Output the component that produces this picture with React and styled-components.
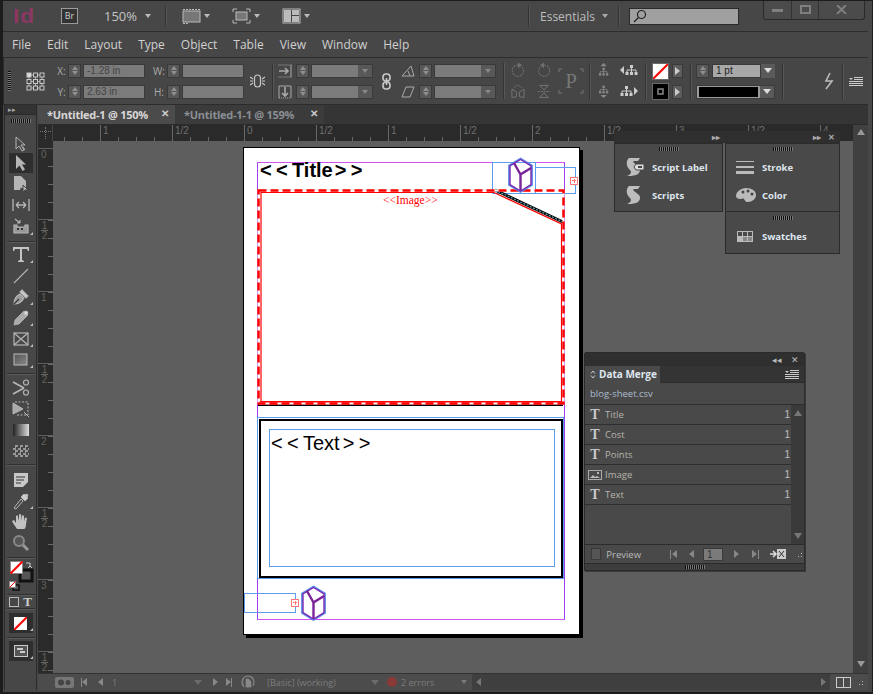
import styled, { createGlobalStyle } from "styled-components";

const GlobalStyle = createGlobalStyle`
  html, body { margin: 0; padding: 0; background: #222; }
  * { box-sizing: border-box; }
`;

const UI = `"Open Sans", "Noto Sans", "Liberation Sans", sans-serif`;

const Window = styled.div`
  width: 873px;
  height: 694px;
  background: #474747;
  border: 1px solid #1c1c1c;
  border-width: 1px 1px 2px 3px;
  padding: 0 4px 2px 0;
  display: flex;
  flex-direction: column;
  overflow: hidden;
  font-family: ${UI};
  color: #c8c8c8;
  position: relative;
`;

const AppBar = styled.div`
  height: 31px;
  flex: none;
  display: flex;
  align-items: center;
  border-bottom: 1px solid #2e2e2e;
  position: relative;
`;

const Logo = styled.div`
  font: bold 23px "Liberation Sans", sans-serif;
  color: #8c3763;
  width: 58px;
  padding-left: 10px;
  letter-spacing: 0.5px;
  transform: scaleY(0.9);
`;

const BridgeBox = styled.div`
  width: 17px;
  height: 16px;
  border: 1px solid #9a9a9a;
  background: #333;
  font-size: 9px;
  line-height: 14px;
  text-align: center;
  color: #ccc;
`;

const ZoomText = styled.div`
  font-size: 13px;
  color: #c4c4c4;
  margin-left: 26px;
  width: 41px;
`;

const Caret = styled.span`
  display: inline-block;
  width: 0;
  height: 0;
  border-left: ${(p) => p.$s || 3}px solid transparent;
  border-right: ${(p) => p.$s || 3}px solid transparent;
  border-top: ${(p) => (p.$s || 3) + 1}px solid ${(p) => p.$c || "#bbb"};
`;

const BarSep = styled.div`
  width: 1px;
  height: 20px;
  background: #333;
  box-shadow: 1px 0 0 #555;
  margin-left: ${(p) => p.$ml}px;
`;

const BarIcon = styled.div`
  display: flex;
  align-items: center;
  gap: 3px;
  margin-left: ${(p) => p.$ml}px;
  color: #bbb;
`;

const Essentials = styled.div`
  font-size: 12px;
  margin-left: 11px;
  width: 62px;
  color: #bdbdbd;
`;

const SearchBox = styled.div`
  width: 110px;
  height: 17px;
  margin-left: 10px;
  background: #a0a0a0;
  border: 1px solid #2b2b2b;
  display: flex;
  align-items: center;
  padding-left: 3px;
`;

const WinControls = styled.div`
  position: absolute;
  top: -1px;
  right: 3px;
  width: 102px;
  height: 20px;
  background: #4b4b4b;
  border: 1px solid #2a2a2a;
  border-top: 0;
  border-radius: 0 0 3px 3px;
  display: grid;
  grid-template-columns: 27px 27px 1fr;
`;

const WinButton = styled.div`
  display: flex;
  align-items: center;
  justify-content: center;
  border-left: ${(p) => (p.$first ? "0" : "1px solid #333")};
`;

const MenuBar = styled.div`
  height: 25px;
  flex: none;
  display: flex;
  align-items: center;
  padding-left: 9px;
  gap: 16px;
  font-size: 12px;
  color: #d0d0d0;
`;

const ControlBar = styled.div`
  height: 48px;
  flex: none;
  display: flex;
  align-items: center;
  background: #464646;
  border: 1px solid #2c2c2c;
  border-right: 0;
`;

const Col = styled.div`
  width: ${(p) => p.$w}px;
  margin-left: ${(p) => p.$ml || 0}px;
  flex: none;
  display: flex;
  flex-direction: column;
  gap: 7px;
  align-items: center;
`;

const Cell = styled.div`
  height: 14px;
  width: 100%;
  display: flex;
  align-items: center;
  justify-content: center;
  color: ${(p) => p.$c || "#aaa"};
  font-size: 10px;
`;

const Spinner = styled.div`
  width: ${(p) => p.$w || "100%"};
  flex: none;
  height: 14px;
  background: #585858;
  border: 1px solid #3a3a3a;
  display: flex;
  flex-direction: column;
  align-items: center;
  justify-content: space-around;
  padding: 1px 0;
  &::before {
    content: "";
    border-left: 3px solid transparent;
    border-right: 3px solid transparent;
    border-bottom: 4px solid #8f8f8f;
  }
  &::after {
    content: "";
    border-left: 3px solid transparent;
    border-right: 3px solid transparent;
    border-top: 4px solid #8f8f8f;
  }
`;

const Field = styled.div`
  width: 100%;
  height: 14px;
  background: ${(p) => p.$bg || "#7b7b7b"};
  border: 1px solid #3a3a3a;
  font: 10px "Liberation Sans", sans-serif;
  line-height: 12px;
  padding-left: 3px;
  color: ${(p) => p.$c || "#444"};
`;

const Select = styled.div`
  width: 100%;
  height: 14px;
  background: ${(p) => p.$bg || "#7b7b7b"};
  border: 1px solid #3a3a3a;
  display: flex;
  justify-content: flex-end;
`;

const SelectArrow = styled.div`
  width: 14px;
  background: ${(p) => p.$bg || "#585858"};
  display: flex;
  align-items: center;
  justify-content: center;
  flex: none;
`;

const StrokeLine = styled.div`
  flex: 1;
  margin: 1px 2px;
  background: #000;
`;

const WeightBox = styled.div`
  flex: 1;
  margin-left: 3px;
  height: 14px;
  display: flex;
`;

const SepCol = styled.div`
  width: 1px;
  height: 36px;
  margin-left: ${(p) => p.$ml}px;
  background: #333;
  box-shadow: 1px 0 0 #585858;
  flex: none;
`;

const FillSwatch = styled.div`
  width: 100%;
  height: 17px;
  border: 1px solid #6a6a6a;
  background: ${(p) => (p.$black ? "#000" : "#fff")};
  display: flex;
  align-items: center;
  justify-content: center;
`;

const SwatchCol = styled.div`
  width: 17px;
  margin-left: 6px;
  flex: none;
  display: flex;
  flex-direction: column;
  gap: 3px;
`;

const ArrowBtn = styled.div`
  width: 100%;
  height: 14px;
  background: #5c5c5c;
  border: 1px solid #3a3a3a;
  display: flex;
  align-items: center;
  justify-content: center;
  &::after {
    content: "";
    border-top: 4px solid transparent;
    border-bottom: 4px solid transparent;
    border-left: 5px solid #ccc;
  }
`;

const Body = styled.div`
  flex: 1;
  min-height: 0;
  display: flex;
`;

const ToolColumn = styled.div`
  width: 33px;
  flex: none;
  border-right: 1px solid #2b2b2b;
  margin-left: 1px;
  border-left: 1px solid #2b2b2b;
  display: flex;
  flex-direction: column;
  align-items: center;
  background: #474747;
`;

const ToolHead = styled.div`
  width: 100%;
  height: 10px;
  background: #333;
  color: #aaa;
  font-size: 7px;
  line-height: 9px;
  padding-left: 3px;
  border-bottom: 1px solid #2b2b2b;
`;

const Grip = styled.div`
  width: ${(p) => p.$w || 20}px;
  height: ${(p) => p.$h || 4}px;
  margin: ${(p) => p.$m || "5px 0"};
  flex: none;
  background: ${(p) =>
    p.$h
      ? "repeating-linear-gradient(180deg, #111 0 1px, #777 1px 2px)"
      : "repeating-linear-gradient(90deg, #111 0 1px, #777 1px 2px)"};
`;

const Tool = styled.div`
  width: 24px;
  height: ${(p) => p.$h || 21}px;
  flex: none;
  display: flex;
  align-items: center;
  justify-content: center;
  color: #b5b5b5;
  background: ${(p) => (p.$on ? "#2e2e2e" : "transparent")};
  position: relative;
  &::after {
    content: ${(p) => (p.$more ? '""' : "none")};
    position: absolute;
    right: 0;
    bottom: 2px;
    border-left: 3px solid transparent;
    border-bottom: 3px solid #bbb;
  }
`;

const ToolSep = styled.div`
  width: 28px;
  height: 1px;
  background: #2f2f2f;
  box-shadow: 0 1px 0 #5a5a5a;
  margin: ${(p) => p.$m || "3px 0 3px"};
  flex: none;
`;

const Checker = styled.div`
  width: 16px;
  height: 12px;
  background: repeating-conic-gradient(#999 0 25%, #444 0 50%) 0 0 / 5px 5px;
`;

const FillStroke = styled.div`
  width: 26px;
  height: 30px;
  flex: none;
`;

const FormatRow = styled.div`
  display: flex;
  align-items: center;
  gap: 4px;
  height: 13px;
  flex: none;
`;

const FormatSquare = styled.div`
  width: 10px;
  height: 10px;
  border: 1px solid #bbb;
`;

const FormatT = styled.div`
  font: bold 13px "Liberation Serif", serif;
  color: #ccc;
`;

const Workspace = styled.div`
  flex: 1;
  min-width: 0;
  display: flex;
  flex-direction: column;
  margin-left: 1px;
`;

const TabRow = styled.div`
  height: 20px;
  flex: none;
  display: flex;
  background: #353535;
  border-bottom: 1px solid #2b2b2b;
`;

const Tab = styled.div`
  width: ${(p) => p.$w}px;
  display: flex;
  align-items: center;
  padding-left: 9px;
  font: bold 11px "Open Sans", sans-serif;
  letter-spacing: -0.25px;
  background: ${(p) => (p.$on ? "#4b4b4b" : "#3b3b3b")};
  color: ${(p) => (p.$on ? "#d8d8d8" : "#8a8f94")};
  position: relative;
`;

const TabClose = styled.span`
  position: absolute;
  right: 6px;
  top: 1px;
  font-size: 10px;
  color: #ccc;
`;

const RulerRow = styled.div`
  height: 16px;
  flex: none;
  display: flex;
`;

const RulerCorner = styled.div`
  width: 15px;
  flex: none;
  background: #2a2a2a;
  border-right: 1px solid #444;
  position: relative;
  &::before {
    content: "";
    position: absolute;
    left: 7px;
    top: 2px;
    height: 12px;
    border-left: 1px dotted #777;
  }
  &::after {
    content: "";
    position: absolute;
    left: 2px;
    top: 6px;
    width: 11px;
    border-top: 1px dotted #777;
  }
`;

const HRuler = styled.div`
  flex: 1;
  background-color: #2a2a2a;
  position: relative;
  overflow: hidden;
  background-image: repeating-linear-gradient(90deg, #6a6a6a 0 1px, transparent 1px 18px);
  background-size: calc(100% + 18px) 4px;
  background-repeat: no-repeat;
  background-position: -7px bottom;
`;

const HMajor = styled.div`
  position: absolute;
  top: 0;
  bottom: 0;
  border-left: 1px solid #6a6a6a;
  padding-left: 2px;
  font: 10px "Liberation Sans", sans-serif;
  color: #6f6f6f;
  line-height: 11px;
`;

const Middle = styled.div`
  flex: 1;
  min-height: 0;
  display: flex;
`;

const VRuler = styled.div`
  width: 15px;
  flex: none;
  background-color: #2a2a2a;
  position: relative;
  overflow: hidden;
  background-image: repeating-linear-gradient(180deg, #6a6a6a 0 1px, transparent 1px 18px);
  background-size: 5px calc(100% + 18px);
  background-repeat: no-repeat;
  background-position: right -11px;
`;

const VMajor = styled.div`
  position: absolute;
  left: 0;
  right: 0;
  border-top: 1px solid #5f5f5f;
  font: 10px "Liberation Sans", sans-serif;
  color: #68645c;
  line-height: 10px;
  padding: 1px 0 0 3px;
`;

const Fraction = styled.div`
  width: 7px;
  text-align: center;
  line-height: 9px;
  &:first-child { border-bottom: 1px solid #666; }
`;

const Canvas = styled.div`
  flex: 1;
  min-width: 0;
  background: #5e5e5e;
  position: relative;
`;

const VScroll = styled.div`
  width: 15px;
  flex: none;
  background: #404040;
  margin-top: -16px;
  display: flex;
  flex-direction: column;
  justify-content: space-between;
  align-items: center;
  padding: 4px 0 6px;
  position: relative;
`;

const ScrollUp = styled.div`
  border-left: 4px solid transparent;
  border-right: 4px solid transparent;
  border-bottom: 6px solid ${(p) => p.$c || "#999"};
`;

const ScrollDown = styled.div`
  border-left: 4px solid transparent;
  border-right: 4px solid transparent;
  border-top: 6px solid ${(p) => p.$c || "#999"};
`;

const StatusBar = styled.div`
  height: 17px;
  flex: none;
  background: #4c4c4c;
  border-top: 1px solid #333;
  display: flex;
  align-items: center;
  font: 9px "Open Sans", sans-serif;
  color: #7d7d7d;
  position: relative;
`;

const StatusItem = styled.div`
  margin-left: ${(p) => p.$ml || 0}px;
  width: ${(p) => (p.$w ? p.$w + "px" : "auto")};
  flex: none;
  display: flex;
  align-items: center;
`;

const ErrorDot = styled.span`
  width: 10px;
  height: 10px;
  border-radius: 50%;
  background: #8a3a36;
  display: inline-block;
`;

const HScroll = styled.div`
  flex: 1;
  height: 100%;
  margin-left: 5px;
  background: #3f3f3f;
  display: flex;
  align-items: center;
  justify-content: space-between;
  padding: 0 4px;
`;

const LeftTri = styled.span`
  border-top: 4px solid transparent;
  border-bottom: 4px solid transparent;
  border-right: 5px solid ${(p) => p.$c || "#888"};
`;

const RightTri = styled.span`
  border-top: 4px solid transparent;
  border-bottom: 4px solid transparent;
  border-left: 5px solid ${(p) => p.$c || "#888"};
`;

const LayoutBox = styled.div`
  width: 38px;
  flex: none;
  height: 100%;
  display: flex;
  align-items: center;
  justify-content: flex-end;
  gap: 4px;
  padding-right: 3px;
`;

const SplitIcon = styled.div`
  width: 15px;
  height: 11px;
  border: 1px solid #ccc;
  position: relative;
  &::after {
    content: "";
    position: absolute;
    left: 6px;
    top: 0;
    height: 9px;
    border-left: 1px solid #ccc;
  }
`;

const Dots = styled.div`
  width: 10px;
  height: 10px;
  margin-left: ${(p) => p.$ml || 0}px;
  flex: none;
  background: radial-gradient(#bbb 0.6px, transparent 0.8px);
  background-size: 3px 3px;
  clip-path: polygon(100% 0, 100% 100%, 0 100%);
`;

const Page = styled.div`
  position: absolute;
  left: 191px;
  top: 7px;
  width: 335px;
  height: 486px;
  background: #fff;
  box-shadow: 0 0 0 1px #000, 3px 3px 0 1px #000;
`;

const Frame = styled.div`
  position: absolute;
  left: ${(p) => p.$x - 244}px;
  top: ${(p) => p.$y - 148}px;
  width: ${(p) => p.$w}px;
  height: ${(p) => p.$h}px;
  border: ${(p) => p.$b || "1px solid #5b9bf0"};
`;

const MarginBox = styled.div`
  position: absolute;
  left: 13px;
  top: 14px;
  width: 308px;
  height: 458px;
  border: 1px solid;
  border-color: #d050f0 #a040f0 #d050f0 #a040f0;
`;

const PageText = styled.div`
  position: absolute;
  left: ${(p) => p.$x - 244}px;
  top: ${(p) => p.$y - 148}px;
  font: ${(p) => p.$font};
  color: ${(p) => p.$c || "#000"};
  white-space: nowrap;
`;

const Chevrons = styled.span`
  letter-spacing: 4.3px;
`;

const Word = styled.span`
  margin-right: ${(p) => p.$mr}px;
`;

const Art = styled.svg`
  position: absolute;
  left: ${(p) => p.$x - 244}px;
  top: ${(p) => p.$y - 148}px;
  overflow: visible;
`;

const Overset = styled.div`
  position: absolute;
  left: ${(p) => p.$x - 244}px;
  top: ${(p) => p.$y - 148}px;
  width: 8px;
  height: 8px;
  border: 1px solid #f77;
  background: #fff;
  &::before {
    content: "";
    position: absolute;
    left: 1px;
    top: 2px;
    width: 4px;
    border-top: 1px solid #f77;
  }
  &::after {
    content: "";
    position: absolute;
    left: 2.5px;
    top: 1px;
    height: 4px;
    border-left: 1px solid #f77;
  }
`;

const Dock = styled.div`
  position: absolute;
  left: ${(p) => p.$x}px;
  top: ${(p) => p.$y}px;
  width: ${(p) => p.$w}px;
  display: flex;
  flex-direction: column;
  font: bold 9.5px "Open Sans", sans-serif;
  color: #dfe6ee;
`;

const DockHead = styled.div`
  height: 12px;
  background: #2f2f2f;
  border-radius: 2px 2px 0 0;
  display: flex;
  justify-content: flex-end;
  align-items: center;
  gap: 7px;
  padding-right: 5px;
  font-size: 8px;
  line-height: 12px;
  color: #aaa;
`;

const HeadMark = styled.span`
  margin-right: ${(p) => p.$mr || 0}px;
`;

const DockCols = styled.div`
  display: flex;
  gap: 2px;
  align-items: flex-start;
`;

const DockPane = styled.div`
  width: ${(p) => p.$w}px;
  height: ${(p) => p.$h}px;
  margin-top: ${(p) => p.$mt || 0}px;
  background: #494949;
  border: 1px solid #2b2b2b;
  display: flex;
  flex-direction: column;
  align-items: center;
`;

const DockStack = styled.div`
  display: flex;
  flex-direction: column;
`;

const DockItem = styled.div`
  width: 100%;
  height: 28px;
  display: flex;
  align-items: center;
  padding-left: ${(p) => p.$pl}px;
`;

const DockIcon = styled.div`
  width: ${(p) => p.$w}px;
  flex: none;
  display: flex;
  justify-content: center;
  color: #c4c4c4;
`;

const DockLabel = styled.span`
  margin-left: ${(p) => p.$ml}px;
`;

const MergePanel = styled.div`
  position: absolute;
  left: 531px;
  top: 211px;
  width: 221px;
  height: 219px;
  background: #494949;
  border: 1px solid #2b2b2b;
  border-radius: 2px 2px 0 0;
  display: flex;
  flex-direction: column;
  box-shadow: 1px 1px 0 #3a3a3a;
`;

const MergeHead = styled.div`
  height: 13px;
  flex: none;
  background: #2f2f2f;
  display: flex;
  justify-content: flex-end;
  align-items: center;
  gap: 9px;
  padding-right: 5px;
  font-size: 9px;
  color: #bbb;
`;

const MergeTabs = styled.div`
  height: 17px;
  flex: none;
  background: #343434;
  display: flex;
  justify-content: space-between;
  align-items: center;
  border-bottom: 1px solid #2b2b2b;
  padding-right: 5px;
`;

const MergeTab = styled.div`
  width: 75px;
  height: 17px;
  background: #4a4a4a;
  font: bold 10px "Open Sans", sans-serif;
  color: #dfe6ee;
  display: flex;
  align-items: center;
  gap: 3px;
  padding-left: 5px;
`;

const FileRow = styled.div`
  height: 22px;
  flex: none;
  display: flex;
  align-items: center;
  padding-left: 5px;
  font: 9.5px "Open Sans", sans-serif;
  color: #a9bccd;
  border-bottom: 1px solid #2e2e2e;
`;

const MergeBody = styled.div`
  flex: 1;
  min-height: 0;
  display: flex;
`;

const Rows = styled.div`
  flex: 1;
  display: flex;
  flex-direction: column;
`;

const FieldRow = styled.div`
  height: 20px;
  flex: none;
  display: flex;
  align-items: center;
  border-bottom: 1px solid #2e2e2e;
  font: 9.5px "Open Sans", sans-serif;
  color: #b8b4ac;
  padding-right: 1px;
`;

const RowIcon = styled.div`
  width: 20px;
  flex: none;
  display: flex;
  justify-content: center;
  font: bold 14px "Liberation Serif", serif;
  color: #c8c8c8;
`;

const RowCount = styled.div`
  margin-left: auto;
  font: 10px "Liberation Sans", sans-serif;
  color: #c0c0c0;
`;

const PanelScroll = styled.div`
  width: 13px;
  flex: none;
  background: #3a3a3a;
  display: flex;
  flex-direction: column;
  justify-content: space-between;
  align-items: center;
  padding: 5px 0;
`;

const MergeFoot = styled.div`
  height: 19px;
  flex: none;
  display: flex;
  align-items: center;
  border-top: 1px solid #2b2b2b;
  font: 9.5px "Open Sans", sans-serif;
  color: #bbb;
  padding-left: 6px;
`;

const CheckBox = styled.div`
  width: 12px;
  height: 12px;
  background: #555;
  border: 1px solid #3a3a3a;
  margin-right: 5px;
`;

const PagerField = styled.div`
  width: 23px;
  height: 13px;
  background: #7b7b7b;
  border: 1px solid #3a3a3a;
  font: 10px "Liberation Sans", sans-serif;
  line-height: 11px;
  color: #333;
  padding-left: 3px;
  margin: 0 11px 0 9px;
`;

const PagerBtn = styled.div`
  margin-left: ${(p) => p.$ml || 0}px;
  display: flex;
  align-items: center;
  gap: 1px;
`;

const Bar = styled.span`
  width: 1px;
  height: 9px;
  background: ${(p) => p.$c || "#888"};
`;

const GripRow = styled.div`
  height: 7px;
  flex: none;
  background: #3d3d3d;
  border-top: 1px solid #2b2b2b;
  display: flex;
  justify-content: center;
  align-items: center;
`;

// --- drawings ---

const Ico = ({ w = 18, h = 18, sw = 1.2, children, fill = "none" }) => (
  <svg width={w} height={h} viewBox={`0 0 ${w} ${h}`} fill={fill} stroke="currentColor" strokeWidth={sw} style={{ display: "block" }}>
    {children}
  </svg>
);

const Cube = ({ x, y }) => (
  <Art $x={x} $y={y} width="27" height="37" viewBox="0 0 27 37" fill="none">
    <path d="M13.5 1.5 25 8.5v19.5L13.5 35 2 28V8.5z" stroke="#5a8ae8" strokeWidth="1.8" />
    <path d="M13.5 2.5 24 9v18.5L13.5 34 3 27.5V9z" stroke="#7b2ab0" strokeWidth="1.4" />
    <path d="M13.5 34V17.5L24 11M13.5 17.5 7 6" stroke="#7b2399" strokeWidth="2.4" />
  </Art>
);

// org-chart style align glyph, with the little arrow on the side it points to
const Tree = ({ dir }) => (
  <svg width="18" height="19" viewBox="0 0 18 19" fill="currentColor" stroke="none">
    <g transform={dir === "left" ? "translate(5 3)" : dir === "right" ? "translate(0 3)" : dir === "up" ? "translate(2 5)" : "translate(2 1)"}>
      <rect x="5" y="1" width="3" height="3" />
      <rect x="0.500" y="8" width="3" height="3" />
      <rect x="5" y="8" width="3" height="3" />
      <rect x="9.500" y="8" width="3" height="3" />
      <path d="M6.500 4v4M2 8V6h9v2" fill="none" stroke="currentColor" />
    </g>
    {dir === "up" && <path d="M8.500 0l4 4h-8z" />}
    {dir === "down" && <path d="M8.500 18l4-4h-8z" />}
    {dir === "left" && <path d="M0 9l4-4v8z" />}
    {dir === "right" && <path d="M18 9l-4-4v8z" />}
  </svg>
);

const ScriptIcon = ({ tag }) => (
  <svg width="19" height="20" viewBox="0 0 19 20" fill="#bdbdbd">
    <path d="M4 1h11l-2 3H9c-1 0-1 1 0 2l5 4c2 2 1 7-3 8-3 1-7 1-9 1 2-1 4-2 4-4 0-1-1-2-2-3-3-3-3-9 0-11z" />
    {tag && <path d="M11 7h8v6h-8l-2-3z" fill="#ddd" stroke="#494949" />}
    {tag && <rect x="13" y="9" width="4" height="2" fill="#444" />}
  </svg>
);

const MenuGlyph = () => (
  <svg width="14" height="9" stroke="#ccc" fill="none">
    <path d="M5 .5h9M5 2.500h9M0 4.500h14M0 6.500h14M0 8.500h14" />
    <path d="M0 1h4L2 3z" fill="#ccc" stroke="none" />
  </svg>
);

const rulerH = [
  [62, "1"], [134, "1/2"], [206, "0"], [278, "1/2"], [350, "1"], [422, "1/2"],
  [494, "2"], [566, "1/2"], [638, "3"], [710, "1/2"], [782, "4"],
];

const rulerV = [
  [7, "0"], [78, "1/2"], [150, "1"], [222, "1/2"], [294, "2"], [366, "1/2"], [438, "3"], [510, "1/2"],
];

const mergeFields = ["Title", "Cost", "Points", "Image", "Text"];
const menus = ["File", "Edit", "Layout", "Type", "Object", "Table", "View", "Window", "Help"];

const RefPoints = () => {
  const spots = [1, 7.5, 14];
  return (
    <Ico w={19} h={19} sw={1}>
      <path d="M3 3h13M3 9.500h13M3 16h13M3 3v13M9.500 3v13M16 3v13" stroke="#aaa" />
      {spots.map((y) =>
        spots.map((x) => (
          <rect key={`${x}-${y}`} x={x} y={y} width="4" height="4" fill={x === 1 && y === 1 ? "#ddd" : "#474747"} />
        ))
      )}
    </Ico>
  );
};

const Drop = () => (
  <Select>
    <SelectArrow><Caret $c="#888" /></SelectArrow>
  </Select>
);

export default function App() {
  return (
    <>
      <GlobalStyle />
      <Window>
        <AppBar>
          <Logo>Id</Logo>
          <BridgeBox>Br</BridgeBox>
          <ZoomText>150%</ZoomText>
          <Caret $s={3} />
          <BarSep $ml={14} />
          <BarIcon $ml={16}>
            <Ico w={19} h={16} sw={1}>
              <rect x="1" y="3" width="17" height="11" fill="#777" />
              <path d="M1 1.500h17M1 15.500h6" strokeDasharray="2 1" />
            </Ico>
            <Caret />
          </BarIcon>
          <BarIcon $ml={22}>
            <Ico w={19} h={16} sw={1}>
              <rect x="4" y="4" width="11" height="8" fill="#777" />
              <path d="M1 4V1h4M14 1h4v3M1 12v3h4M14 15h4v-3" />
            </Ico>
            <Caret />
          </BarIcon>
          <BarIcon $ml={22}>
            <Ico w={19} h={16} sw={1}>
              <rect x="1" y="1" width="17" height="14" />
              <rect x="2" y="2" width="7" height="12" fill="#bbb" stroke="none" />
              <rect x="10" y="2" width="7" height="5" fill="#bbb" stroke="none" />
              <rect x="10" y="8" width="7" height="6" fill="#bbb" stroke="none" />
            </Ico>
            <Caret />
          </BarIcon>
          <BarSep $ml={218} />
          <Essentials>Essentials</Essentials>
          <Caret $c="#aaa" />
          <BarSep $ml={10} />
          <SearchBox>
            <svg width="14" height="14" viewBox="0 0 14 14" fill="none" stroke="#222" strokeWidth="1.2">
              <circle cx="8.500" cy="5.500" r="4" />
              <path d="M5.500 8.500 1 13" />
            </svg>
          </SearchBox>
          <WinControls>
            <WinButton $first>
              <svg width="11" height="4"><rect width="11" height="3" y="1" fill="#7f7f7f" /></svg>
            </WinButton>
            <WinButton>
              <svg width="11" height="9" fill="none" stroke="#7f7f7f" strokeWidth="2"><rect x="1" y="1" width="9" height="7" /></svg>
            </WinButton>
            <WinButton>
              <svg width="11" height="9" fill="none" stroke="#7f7f7f" strokeWidth="2"><path d="M1 0l9 9M10 0l-9 9" /></svg>
            </WinButton>
          </WinControls>
        </AppBar>

        <MenuBar>
          {menus.map((m) => (
            <span key={m}>{m}</span>
          ))}
        </MenuBar>

        <ControlBar>
          <Col $w={3} $ml={4}><Grip $w={3} $h={20} $m="0" /></Col>
          <Col $w={19} $ml={15}><RefPoints /></Col>
          <Col $w={11} $ml={11}><Cell>X:</Cell><Cell>Y:</Cell></Col>
          <Col $w={13} $ml={1}><Spinner /><Spinner /></Col>
          <Col $w={62} $ml={2}><Field>-1.28 in</Field><Field>2.63 in</Field></Col>
          <Col $w={12} $ml={8}><Cell>W:</Cell><Cell>H:</Cell></Col>
          <Col $w={13} $ml={2}><Spinner /><Spinner /></Col>
          <Col $w={62} $ml={2}><Field /><Field /></Col>
          <Col $w={15} $ml={6}>
            <Ico w={15} h={14} sw={1.2}>
              <rect x="4.500" y="1" width="6" height="12" rx="3" />
              <path d="M0 3l3 2M0 11l3-2M15 3l-3 2M15 11l-3-2M0 7h3M12 7h3" />
            </Ico>
          </Col>
          <SepCol $ml={7} />
          <Col $w={14} $ml={5}>
            <Cell>
              <Ico w={14} h={14} sw={1}>
                <path d="M0.500 1h13M0.500 13h13" strokeDasharray="1 1" />
                <path d="M13 1v12" />
                <path d="M1 7h9M7 4l3 3-3 3" strokeWidth="1.600" />
              </Ico>
            </Cell>
            <Cell>
              <Ico w={14} h={14} sw={1}>
                <path d="M1 13h12" strokeDasharray="1 1" />
                <path d="M1 1h12M1 1v12M13 1v12" />
                <path d="M7 2v9M4 8l3 3 3-3" strokeWidth="1.600" />
              </Ico>
            </Cell>
          </Col>
          <Col $w={13} $ml={4}><Spinner /><Spinner /></Col>
          <Col $w={62} $ml={2}><Drop /><Drop /></Col>
          <Col $w={11} $ml={8}>
            <Ico w={11} h={17} sw={1.600}>
              <rect x="2" y="1" width="7" height="7" rx="3" />
              <rect x="2" y="9" width="7" height="7" rx="3" />
              <path d="M5.500 5v7" />
            </Ico>
          </Col>
          <Col $w={14} $ml={9}>
            <Cell>
              <Ico w={14} h={12} sw={1}><path d="M1 11h12L10 1z" /><path d="M7 6l2 5" /></Ico>
            </Cell>
            <Cell>
              <Ico w={14} h={12} sw={1}><path d="M1 11 5 1h8l-4 10z" /></Ico>
            </Cell>
          </Col>
          <Col $w={13} $ml={4}><Spinner /><Spinner /></Col>
          <Col $w={62} $ml={2}><Drop /><Drop /></Col>
          <SepCol $ml={7} />
          <Col $w={14} $ml={7}>
            <Cell $c="#6f6f6f">
              <Ico w={15} h={15} sw={1.2}><path d="M12 4a6 6 0 1 1-3-2" strokeDasharray="2 1" /><path d="M8 0v4l3-2z" fill="currentColor" /></Ico>
            </Cell>
            <Cell $c="#777">
              <Ico w={15} h={15} sw={1}><path d="M1 5 6 8v5L1 14zM14 5 9 8v5l5 1z" /><path d="M3 4a5 5 0 0 1 9 0" strokeDasharray="2 1" /></Ico>
            </Cell>
          </Col>
          <Col $w={14} $ml={12}>
            <Cell $c="#6f6f6f">
              <Ico w={15} h={15} sw={1.2}><path d="M3 4a6 6 0 1 0 3-2" strokeDasharray="2 1" /><path d="M7 0v4L4 2z" fill="currentColor" /></Ico>
            </Cell>
            <Cell $c="#777">
              <Ico w={15} h={15} sw={1}><path d="M3 1h9L7.500 6zM3 14h9L7.500 9z" /><path d="M1 7.500h13" strokeDasharray="2 1" /></Ico>
            </Cell>
          </Col>
          <Col $w={26} $ml={7}>
            <svg width="26" height="26" viewBox="0 0 26 26" fill="none" stroke="#777">
              <path d="M1 4V1h3M22 1h3v3M1 22v3h3M22 25h3v-3" />
              <text x="13" y="20" textAnchor="middle" fontFamily="Liberation Serif" fontSize="21" fill="#777" stroke="none">P</text>
            </svg>
          </Col>
          <SepCol $ml={5} />
          <Col $w={14} $ml={7}>
            <Cell $c="#8a8a8a"><Tree dir="up" /></Cell>
            <Cell $c="#8a8a8a"><Tree dir="down" /></Cell>
          </Col>
          <Col $w={18} $ml={9}>
            <Cell $c="#ccc"><Tree dir="left" /></Cell>
            <Cell $c="#ccc"><Tree dir="right" /></Cell>
          </Col>
          <SepCol $ml={7} />
          <SwatchCol>
            <FillSwatch>
              <svg width="15" height="15"><path d="M0 15 15 0" stroke="#f00" strokeWidth="2" /></svg>
            </FillSwatch>
            <FillSwatch $black>
              <svg width="7" height="7"><rect x="1" y="1" width="5" height="5" fill="none" stroke="#888" strokeWidth="1.500" /></svg>
            </FillSwatch>
          </SwatchCol>
          <Col $w={11} $ml={3}><ArrowBtn /><ArrowBtn /></Col>
          <SepCol $ml={7} />
          <Col $w={79} $ml={5}>
            <Cell>
              <Spinner $w="13px" />
              <WeightBox>
                <Field $bg="#a8a8a8" $c="#222">1 pt</Field>
                <SelectArrow $bg="#5a5a5a"><Caret $s={4} $c="#ddd" /></SelectArrow>
              </WeightBox>
            </Cell>
            <Cell>
              <Select $bg="#9a9a9a">
                <StrokeLine />
                <SelectArrow $bg="#5a5a5a"><Caret $s={4} $c="#ddd" /></SelectArrow>
              </Select>
            </Cell>
          </Col>
          <SepCol $ml={7} />
          <Col $w={14} $ml={39}>
            <svg width="12" height="18" viewBox="0 0 12 18" fill="none" stroke="#bbb" strokeWidth="1.600">
              <path d="M7 1 3 9h6l-6 8" />
            </svg>
          </Col>
          <SepCol $ml={6} />
          <Col $w={14} $ml={6}><MenuGlyph /></Col>
        </ControlBar>

        <Body>
          <ToolColumn>
            <ToolHead>▸▸</ToolHead>
            <Grip $m="4px 0 11px" />
            <Tool $h={19}>
              <Ico sw={1}><path d="M4 2v12l3-3 3 5 2-1-3-5h4z" /><path d="M11 12l2 3" /></Ico>
            </Tool>
            <Tool $on $h={20}>
              <Ico fill="currentColor" sw={0}><path d="M4 1v14l3.500-3.500 3 5.500 2.500-1.500-3-5h4z" /></Ico>
            </Tool>
            <Tool $h={22}>
              <Ico fill="currentColor" sw={0}><path d="M2 1h7l5 5v7H9v-1l-1 3H2z" /><path d="M11 10v7l2-2h3z" stroke="#474747" strokeWidth="1" /></Ico>
            </Tool>
            <Tool $h={20}>
              <Ico w={20} h={18} sw={1.3}>
                <path d="M2 3v12M18 3v12M5 9h10M5 9l3-3M5 9l3 3M15 9l-3-3M15 9l-3 3" />
              </Ico>
            </Tool>
            <Tool $h={22} $more>
              <Ico w={18} h={18} sw={1.2}>
                <path d="M3 2l5 4M8 6V3M8 6H5" />
                <path d="M2 8v8h14V8h-3v2H5V8z" fill="#999" />
                <path d="M5 12h2M9 12h2" stroke="#333" strokeWidth="2" />
              </Ico>
            </Tool>
            <ToolSep $m="4px 0 2px" />
            <Tool $h={21} $more>
              <svg width="16" height="15"><path d="M0 0h16v4h-1l-1-2H9v11l2 1v1H5v-1l2-1V2H2L1 4H0z" fill="#c4c4c4" /></svg>
            </Tool>
            <Tool $h={21}>
              <Ico sw={1.1}><path d="M2 16 16 2" /></Ico>
            </Tool>
            <Tool $h={21} $more>
              <Ico sw={1.1} fill="#9a9a9a"><path d="M2 16c0-5 2-8 6-10l4 4c-2 4-5 6-10 6z" /><path d="M10 2l6 6-2 2-6-6z" fill="#ccc" /><path d="M2 16l5-5" stroke="#333" /></Ico>
            </Tool>
            <Tool $h={21} $more>
              <Ico sw={0.8} fill="#aaa"><path d="M2 16l1-5L12 2l4 4-9 9z" /><circle cx="14" cy="4" r="2" fill="#ddd" /></Ico>
            </Tool>
            <Tool $h={21} $more>
              <Ico sw={1.2}><rect x="2" y="3" width="14" height="12" /><path d="M2 3l14 12M16 3 2 15" /></Ico>
            </Tool>
            <Tool $h={21} $more>
              <svg width="15" height="13"><defs><linearGradient id="rg" x1="0" y1="0" x2="1" y2="1"><stop offset="0" stopColor="#555" /><stop offset="1" stopColor="#888" /></linearGradient></defs><rect x="1" y="1" width="13" height="11" fill="url(#rg)" stroke="#bbb" /></svg>
            </Tool>
            <ToolSep $m="3px 0 3px" />
            <Tool $h={21}>
              <Ico sw={1.2}>
                <circle cx="14" cy="3.500" r="2.500" /><circle cx="14" cy="13.500" r="2.500" />
                <path d="M1 3l11 6M1 15l11-6" strokeWidth="1.800" />
              </Ico>
            </Tool>
            <Tool $h={21}>
              <Ico sw={1}>
                <path d="M1 3v11l10-5z" fill="#aaa" />
                <path d="M3 2h13v13H4" strokeDasharray="2 1.500" />
                <path d="M12 12l5 5" />
              </Ico>
            </Tool>
            <Tool $h={21}>
              <svg width="16" height="12"><defs><linearGradient id="gr"><stop offset="0" stopColor="#222" /><stop offset="1" stopColor="#ddd" /></linearGradient></defs><rect width="16" height="12" fill="url(#gr)" /></svg>
            </Tool>
            <Tool $h={21}>
              <Checker />
            </Tool>
            <ToolSep $m="3px 0 4px" />
            <Tool $h={21}>
              <Ico sw={0} fill="#c8c8c8"><path d="M2 2h14v9l-5 5H2z" /><path d="M4 6h9M4 9h8M4 12h5" stroke="#333" strokeWidth="1" /></Ico>
            </Tool>
            <Tool $h={21} $more>
              <Ico sw={1}><path d="M2 16 9 7l2 2-7 8z" /><path d="M9 5l4 4 3-3-1-1 1-2-1-1-2 1-1-1z" fill="#ccc" /></Ico>
            </Tool>
            <Tool $h={21}>
              <svg width="17" height="17" viewBox="0 0 17 17" fill="#c2c2c2"><path d="M5 16C3 13 1 10 0 8l2-1 2 3V3l1.500-1L7 8V1.500L9 1l1 7V2.500h2l0 6 1-4 2 .5L14 11c0 3-1 5-2 5z" /></svg>
            </Tool>
            <Tool $h={21}>
              <Ico sw={2}><circle cx="7" cy="7" r="5" stroke="#888" fill="#555" /><path d="M11 11l5 5" stroke="#999" strokeWidth="3" /></Ico>
            </Tool>
            <ToolSep $m="4px 0 3px" />
            <FillStroke>
              <svg width="26" height="30" viewBox="0 0 26 30" fill="none">
                <rect x="12" y="9" width="12" height="11" stroke="#111" strokeWidth="3" fill="#555" />
                <rect x="2.500" y="0.500" width="12" height="12" fill="#fff" stroke="#888" />
                <path d="M2.500 12.500 14.500 .5" stroke="#f00" strokeWidth="2" />
                <path d="M18 2h4v3M20 7l2-2 2 2" stroke="#ccc" />
                <rect x="5" y="24" width="6" height="5" stroke="#111" fill="#555" strokeWidth="1.500" />
                <rect x="1.500" y="20.500" width="6" height="6" fill="#fff" stroke="#888" />
                <path d="M1.500 26.500l6-6" stroke="#f00" />
              </svg>
            </FillStroke>
            <ToolSep $m="3px 0 0" />
            <FormatRow>
              <FormatSquare />
              <FormatT>T</FormatT>
            </FormatRow>
            <ToolSep $m="0 0 4px" />
            <Tool $on $h={20} $more>
              <svg width="13" height="13"><rect width="13" height="13" fill="#fff" /><path d="M0 13 13 0" stroke="#f00" strokeWidth="2" /></svg>
            </Tool>
            <ToolSep $m="4px 0 3px" />
            <Tool $on $h={20} $more>
              <svg width="14" height="12" fill="none"><rect x="0.500" y="0.500" width="13" height="11" stroke="#ccc" fill="#555" /><path d="M3 4h6M6 7h5" stroke="#ccc" strokeWidth="2" /></svg>
            </Tool>
          </ToolColumn>

          <Workspace>
            <TabRow>
              <Tab $on $w={137}>*Untitled-1 @ 150%<TabClose>✕</TabClose></Tab>
              <Tab $w={149}>*Untitled-1-1 @ 159%<TabClose>✕</TabClose></Tab>
            </TabRow>
            <RulerRow>
              <RulerCorner />
              <HRuler>
                {rulerH.map(([x, label]) => (
                  <HMajor key={x} style={{ left: x - 15 }}>{label}</HMajor>
                ))}
              </HRuler>
            </RulerRow>
            <Middle>
              <VRuler>
                {rulerV.map(([y, label]) => (
                  <VMajor key={y} style={{ top: y }}>
                    {label === "1/2" ? (
                      <>
                        <Fraction>1</Fraction>
                        <Fraction>2</Fraction>
                      </>
                    ) : label}
                  </VMajor>
                ))}
              </VRuler>
              <Canvas>
                <Page>
                  <MarginBox />
                  <Frame $x={492} $y={162} $w={44} $h={32} />
                  <Frame $x={535} $y={167} $w={41} $h={27} />
                  <Overset $x={570} $y={177} />
                  <PageText $x={260} $y={159} $font={`bold 20px "Liberation Sans", sans-serif`}>
                    <Chevrons>{"<<"}</Chevrons><Word $mr={2}>Title</Word><Chevrons>{">>"}</Chevrons>
                  </PageText>
                  <Art $x={244} $y={148} width="335" height="486" viewBox="244 148 335 486" fill="none">
                    <path d="M258 190H494" stroke="#aaa" />
                    <path d="M261 192.500H494L561.500 224V401.500H261z" stroke="#f00" strokeWidth="1.200" />
                    <path d="M495 190 563 222" stroke="#000" strokeWidth="3" />
                    <path d="M495 190 563 222" stroke="#6ab" strokeWidth="1.200" strokeDasharray="2 1.500" />
                    <path d="M258 405H563" stroke="#000" strokeWidth="2" />
                    <path d="M258 403H563" stroke="#f00" strokeWidth="3" />
                    <rect x="258.500" y="190.500" width="305" height="213" stroke="#fff" strokeWidth="2" />
                    <rect x="258.500" y="190.500" width="305" height="213" stroke="#f00" strokeWidth="2.500" strokeDasharray="8 4" />
                  </Art>
                  <PageText $x={383} $y={194} $c="#f00" $font={`11.500px "Liberation Serif", serif`}>{"<<Image>>"}</PageText>
                  <Frame $x={257} $y={417} $w={307} $h={162} />
                  <Frame $x={259} $y={419} $w={304} $h={159} $b="2px solid #000" />
                  <Frame $x={269} $y={429} $w={286} $h={138} />
                  <PageText $x={271} $y={432} $font={`20px "Liberation Sans", sans-serif`}>
                    <Chevrons>{"<<"}</Chevrons><Word $mr={3}>Text</Word><Chevrons>{">>"}</Chevrons>
                  </PageText>
                  <Frame $x={244} $y={593} $w={52} $h={20} />
                  <Overset $x={291} $y={599} />
                  <Cube x={507} y={157} />
                  <Cube x={300} y={585} />
                </Page>

                <Dock $x={561} $y={-10} $w={226}>
                  <DockHead>
                    <HeadMark $mr={86}>▸▸</HeadMark>
                    <HeadMark>▸▸</HeadMark>
                    <HeadMark>✕</HeadMark>
                  </DockHead>
                  <DockCols>
                    <DockPane $w={109} $h={69}>
                      <Grip $m="3px 0 2px" />
                      <DockItem $pl={10}>
                        <DockIcon $w={19}><ScriptIcon tag /></DockIcon>
                        <DockLabel $ml={8}>Script Label</DockLabel>
                      </DockItem>
                      <DockItem $pl={10}>
                        <DockIcon $w={19}><ScriptIcon /></DockIcon>
                        <DockLabel $ml={8}>Scripts</DockLabel>
                      </DockItem>
                    </DockPane>
                    <DockStack>
                      <DockPane $w={115} $h={69}>
                        <Grip $m="3px 0 2px" />
                        <DockItem $pl={10}>
                          <DockIcon $w={18}>
                            <svg width="18" height="13" fill="#bbb"><rect width="18" height="1" /><rect y="5" width="18" height="2" /><rect y="10" width="18" height="3" /></svg>
                          </DockIcon>
                          <DockLabel $ml={8}>Stroke</DockLabel>
                        </DockItem>
                        <DockItem $pl={10}>
                          <DockIcon $w={20}>
                            <svg width="20" height="14" viewBox="0 0 20 14" fill="#bbb"><path d="M10 0c6 0 10 3 10 7s-4 7-8 7c-3 0-3-2-4-3s-2 0-4 0-4-1-4-3c0-4 5-8 10-8z" /><circle cx="7" cy="4" r="1.500" fill="#444" /><circle cx="12" cy="3" r="1.500" fill="#444" /><circle cx="16" cy="6" r="1.500" fill="#444" /></svg>
                          </DockIcon>
                          <DockLabel $ml={6}>Color</DockLabel>
                        </DockItem>
                      </DockPane>
                      <DockPane $w={115} $h={43} $mt={-1}>
                        <Grip $m="4px 0 2px" />
                        <DockItem $pl={10}>
                          <DockIcon $w={18}>
                            <svg width="16" height="11" fill="none" stroke="#bbb"><rect x="0.500" y="0.500" width="15" height="10" /><path d="M5.500 0v11M10.500 0v11M0 5.500h16" /><rect x="1" y="6" width="4" height="4" fill="#bbb" stroke="none" /><rect x="6" y="6" width="4" height="4" fill="#888" stroke="none" /><rect x="11" y="6" width="4" height="4" fill="#888" stroke="none" /></svg>
                          </DockIcon>
                          <DockLabel $ml={8}>Swatches</DockLabel>
                        </DockItem>
                      </DockPane>
                    </DockStack>
                  </DockCols>
                </Dock>

                <MergePanel>
                  <MergeHead>
                    <span>◂◂</span>
                    <span>✕</span>
                  </MergeHead>
                  <MergeTabs>
                    <MergeTab>
                      <svg width="6" height="9" fill="none" stroke="#ccc"><path d="M1 3.500 3 1l2 2.500M1 5.500 3 8l2-2.500" /></svg>
                      Data Merge
                    </MergeTab>
                    <MenuGlyph />
                  </MergeTabs>
                  <FileRow>blog-sheet.csv</FileRow>
                  <MergeBody>
                    <Rows>
                      {mergeFields.map((f) => (
                        <FieldRow key={f}>
                          <RowIcon>
                            {f === "Image" ? (
                              <svg width="14" height="10" fill="none" stroke="#aaa"><rect x="0.500" y="0.500" width="13" height="9" /><path d="M2 8l3-3 2 2 2-1 3 2z" fill="#bbb" stroke="none" /><circle cx="10" cy="3" r="1" fill="#ddd" stroke="none" /></svg>
                            ) : "T"}
                          </RowIcon>
                          {f}
                          <RowCount>1</RowCount>
                        </FieldRow>
                      ))}
                    </Rows>
                    <PanelScroll>
                      <ScrollUp $c="#777" />
                      <ScrollDown $c="#777" />
                    </PanelScroll>
                  </MergeBody>
                  <MergeFoot>
                    <CheckBox />
                    Preview
                    <PagerBtn $ml={29}><Bar /><LeftTri /></PagerBtn>
                    <PagerBtn $ml={12}><LeftTri /></PagerBtn>
                    <PagerField>1</PagerField>
                    <PagerBtn><RightTri /></PagerBtn>
                    <PagerBtn $ml={13}><RightTri /><Bar /></PagerBtn>
                    <PagerBtn $ml={11}>
                      <svg width="16" height="10" fill="#ccc"><path d="M0 5h5M3 2l3 3-3 3" stroke="#ddd" strokeWidth="1.500" fill="none" /><rect x="7" y="0" width="9" height="10" /><path d="M9 2l5 6M14 2 9 8" stroke="#333" /></svg>
                    </PagerBtn>
                    <Dots $ml={8} />
                  </MergeFoot>
                  <GripRow><Grip $m="0" /></GripRow>
                </MergePanel>
              </Canvas>
              <VScroll>
                <ScrollUp />
                <ScrollDown />
              </VScroll>
            </Middle>
            <StatusBar>
              <StatusItem $ml={17}>
                <svg width="19" height="11" fill="#999"><rect width="19" height="11" rx="2" fill="#777" /><circle cx="6" cy="5.500" r="3" fill="#444" /><circle cx="13" cy="5.500" r="2.500" fill="#444" /></svg>
              </StatusItem>
              <StatusItem $ml={7}><Bar /><LeftTri /></StatusItem>
              <StatusItem $ml={11}><LeftTri /></StatusItem>
              <StatusItem $ml={9} $w={82}>1</StatusItem>
              <StatusItem><Caret $s={4} $c="#6c6c6c" /></StatusItem>
              <StatusItem $ml={11}><RightTri /></StatusItem>
              <StatusItem $ml={8}><RightTri /><Bar /></StatusItem>
              <StatusItem $ml={9}>
                <svg width="15" height="14" fill="none" stroke="#888" strokeWidth="1.200"><circle cx="7" cy="7" r="6" fill="#5a5a5a" /><path d="M4 3h4l3 3v7H4z" fill="#888" stroke="#444" /></svg>
              </StatusItem>
              <StatusItem $ml={11} $w={104}>[Basic] (working)</StatusItem>
              <StatusItem><Caret $s={4} $c="#6c6c6c" /></StatusItem>
              <StatusItem $ml={8}><ErrorDot /></StatusItem>
              <StatusItem $ml={4} $w={60}>2 errors</StatusItem>
              <StatusItem><Caret $c="#7a7a7a" /></StatusItem>
              <HScroll>
                <LeftTri $c="#777" />
                <RightTri $c="#777" />
              </HScroll>
              <LayoutBox>
                <SplitIcon />
                <Dots />
              </LayoutBox>
            </StatusBar>
          </Workspace>
        </Body>
      </Window>
    </>
  );
}
